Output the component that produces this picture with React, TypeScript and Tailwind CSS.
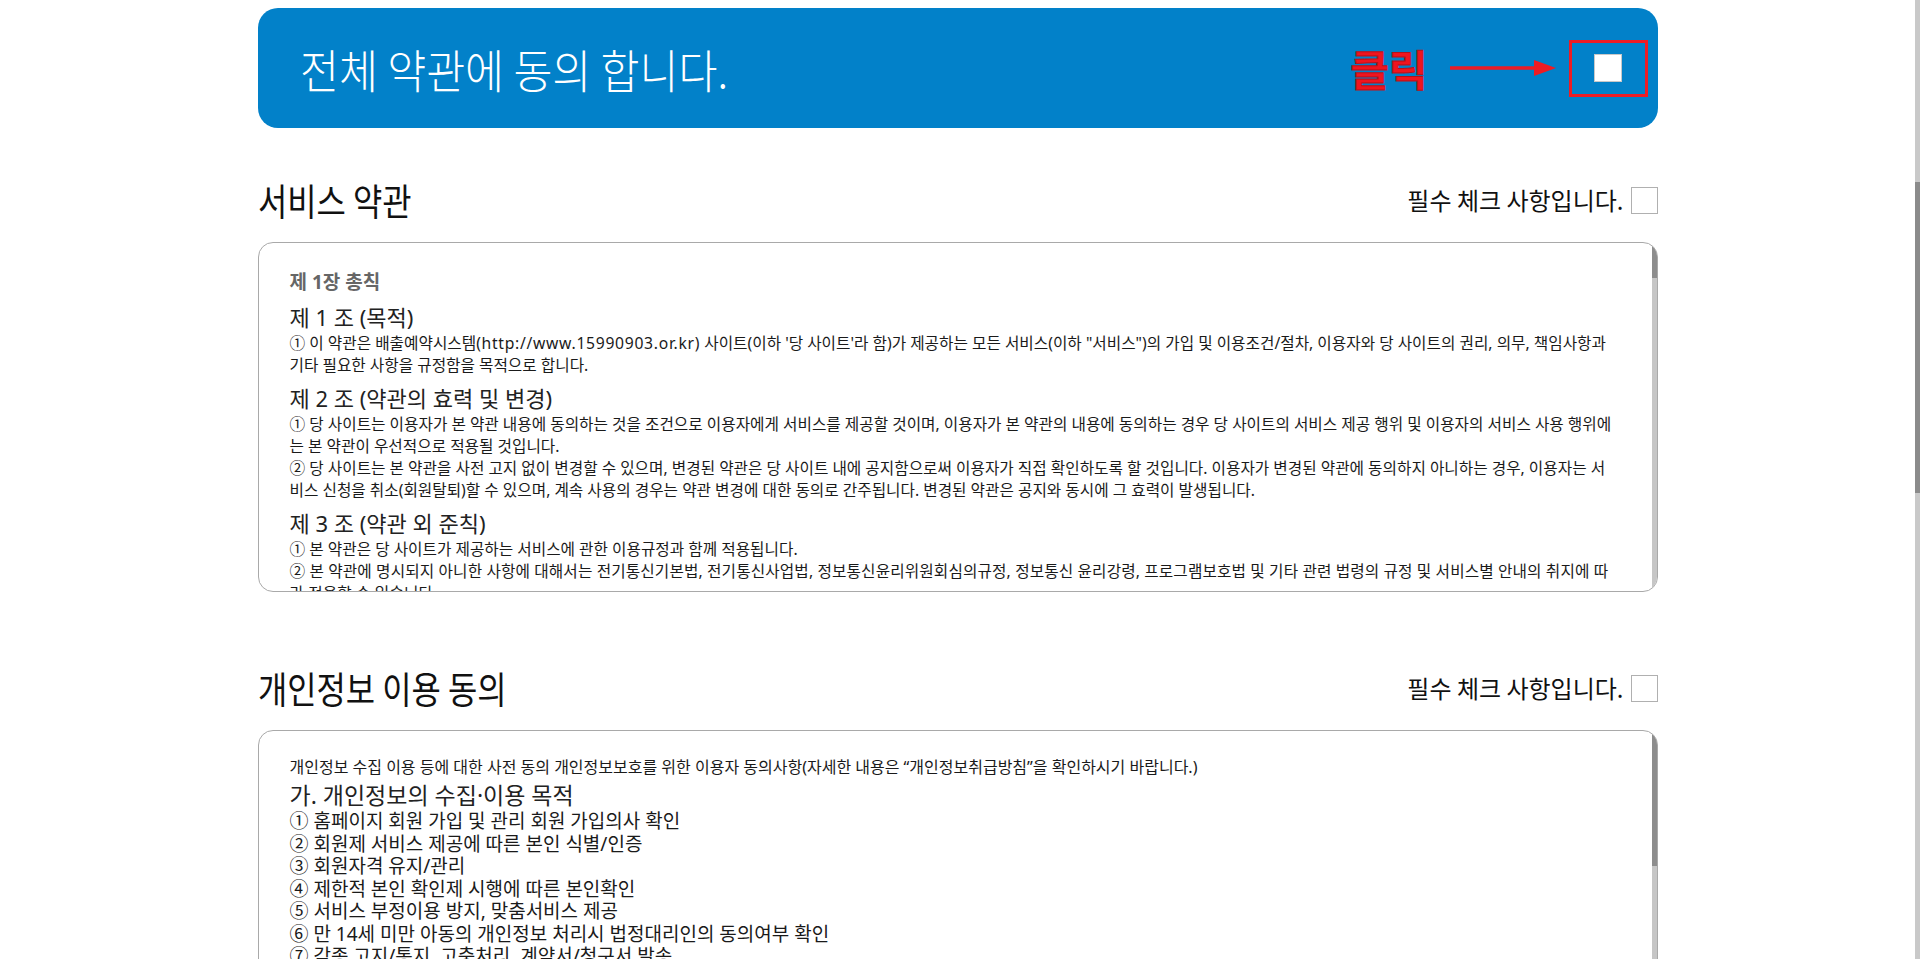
import React from "react";

const FONT = "font-['Noto_Sans','Noto_Sans_CJK_KR',sans-serif]";

function Check() {
  return <div className="h-[27px] w-[27px] shrink-0 border border-[#b0b0b0] bg-white" />;
}

function SectionHeader({ title, mt }: { title: string; mt: string }) {
  return (
    <div className={`flex h-10 items-center justify-between ${mt}`}>
      <h2 className="inline-block origin-left scale-x-[0.86] font-['Noto_Sans_CJK_KR',sans-serif] text-[37px] font-normal leading-none text-[#111]">
        {title}
      </h2>
      <div className="flex items-center gap-[7px]">
        <span className="font-['Noto_Sans_CJK_KR',sans-serif] text-[24px] leading-none text-[#111]">필수 체크 사항입니다.</span>
        <Check />
      </div>
    </div>
  );
}

function InnerScrollbar({ thumb }: { thumb: string }) {
  return (
    <div className="flex w-[5px] shrink-0 flex-col bg-[#c6c6c6]">
      <div className={`${thumb} bg-[#8d8d8d]`} />
    </div>
  );
}

const BODY = "text-[15.7px] leading-[22px]";
const ART = "mt-[7px] text-[22px] leading-[30px] text-[#222]";

export default function App() {
  return (
    <div className={`flex h-[959px] w-full overflow-hidden bg-white ${FONT}`}>
      <div className="min-w-0 flex-1">
        <div className="mx-auto w-[1400px] pt-2">
          {/* banner */}
          <div className="flex h-[120px] items-center justify-between rounded-[20px] bg-[#0281c9] pl-[42px] pr-[10px]">
            <span className="inline-block origin-left scale-x-[0.92] font-['Noto_Sans_CJK_KR',sans-serif] text-[46px] font-light leading-none text-white">
              전체 약관에 동의 합니다.
            </span>
            <div className="flex items-center">
              <span className="font-['Noto_Sans_CJK_KR',sans-serif] text-[42px] font-bold leading-none text-[#f0141e] [-webkit-text-stroke:1px_#b3121a]">
                클릭
              </span>
              <svg width="106" height="20" viewBox="0 0 106 20" className="ml-[22px]">
                <line x1="0" y1="10" x2="88" y2="10" stroke="#ee1c24" strokeWidth="3.5" />
                <polygon points="84,2 106,10 84,18" fill="#ee1c24" />
              </svg>
              <div className="ml-[13px] flex h-[57px] w-[79px] items-center justify-center border-[3px] border-[#ee1c24]">
                <div className="h-[28px] w-[28px] border border-[#c8c8c8] bg-white" />
              </div>
            </div>
          </div>

          {/* section 1 */}
          <SectionHeader title="서비스 약관" mt="mt-[52px]" />
          <div className="mt-[22px] flex h-[350px] overflow-hidden rounded-[15px] border border-[#a9a9a9]">
            <div className="min-w-0 flex-1 pl-[31px] pr-[34px] pt-[26px] text-[#1a1a1a]">
              <p className="text-[19px] font-bold leading-[26px] text-[#666]">제 1장 총칙</p>
              <h3 className={ART}>제 1 조 (목적)</h3>
              <p className={BODY}>
                ① 이 약관은 배출예약시스템<span className="tracking-[0.7px]">(http://www.15990903.or.kr)</span> 사이트(이하 '당 사이트'라 함)가 제공하는 모든 서비스(이하 "서비스")의 가입 및 이용조건/절차, 이용자와 당 사이트의 권리, 의무, 책임사항과 기타 필요한 사항을 규정함을 목적으로 합니다.
              </p>
              <h3 className={ART}>제 2 조 (약관의 효력 및 변경)</h3>
              <p className={BODY}>
                ① 당 사이트는 이용자가 본 약관 내용에 동의하는 것을 조건으로 이용자에게 서비스를 제공할 것이며, 이용자가 본 약관의 내용에 동의하는 경우 당 사이트의 서비스 제공 행위 및 이용자의 서비스 사용 행위에는 본 약관이 우선적으로 적용될 것입니다.
              </p>
              <p className={BODY}>
                ② 당 사이트는 본 약관을 사전 고지 없이 변경할 수 있으며, 변경된 약관은 당 사이트 내에 공지함으로써 이용자가 직접 확인하도록 할 것입니다. 이용자가 변경된 약관에 동의하지 아니하는 경우, 이용자는 서비스 신청을 취소(회원탈퇴)할 수 있으며, 계속 사용의 경우는 약관 변경에 대한 동의로 간주됩니다. 변경된 약관은 공지와 동시에 그 효력이 발생됩니다.
              </p>
              <h3 className={ART}>제 3 조 (약관 외 준칙)</h3>
              <p className={BODY}>① 본 약관은 당 사이트가 제공하는 서비스에 관한 이용규정과 함께 적용됩니다.</p>
              <p className={`${BODY} tracking-[0.12px]`}>
                ② 본 약관에 명시되지 아니한 사항에 대해서는 전기통신기본법, 전기통신사업법, 정보통신윤리위원회심의규정, 정보통신 윤리강령, 프로그램보호법 및 기타 관련 법령의 규정 및 서비스별 안내의 취지에 따라 적용할 수 있습니다.
              </p>
              <h3 className={ART}>제 4 조 (용어의 정의)</h3>
              <p className={BODY}>본 약관에서 사용하는 용어의 정의는 다음과 같습니다.</p>
            </div>
            <InnerScrollbar thumb="h-[35px]" />
          </div>

          {/* section 2 */}
          <SectionHeader title="개인정보 이용 동의" mt="mt-[76px]" />
          <div className="mt-[22px] flex h-[350px] overflow-hidden rounded-[15px] border border-[#a9a9a9]">
            <div className="min-w-0 flex-1 pl-[31px] pr-[30px] pt-[25px] text-[#1a1a1a]">
              <p className="text-[16px] leading-[22px]">
                개인정보 수집 이용 등에 대한 사전 동의 개인정보보호를 위한 이용자 동의사항(자세한 내용은 “개인정보취급방침”을 확인하시기 바랍니다.)
              </p>
              <h3 className="mt-[3px] text-[23px] leading-[29px] text-[#222]">가. 개인정보의 수집·이용 목적</h3>
              <ul className="text-[19px] leading-[22.5px]">
                <li>① 홈페이지 회원 가입 및 관리 회원 가입의사 확인</li>
                <li>② 회원제 서비스 제공에 따른 본인 식별/인증</li>
                <li>③ 회원자격 유지/관리</li>
                <li>④ 제한적 본인 확인제 시행에 따른 본인확인</li>
                <li>⑤ 서비스 부정이용 방지, 맞춤서비스 제공</li>
                <li>⑥ 만 14세 미만 아동의 개인정보 처리시 법정대리인의 동의여부 확인</li>
                <li>⑦ 각종 고지/통지, 고충처리, 계약서/청구서 발송</li>
                <li>⑧ 접속빈도 파악 또는 회원의 서비스 이용에 대한 통계</li>
              </ul>
            </div>
            <InnerScrollbar thumb="h-[135px]" />
          </div>
        </div>
      </div>
      {/* page scrollbar */}
      <div className="flex w-[5px] shrink-0 flex-col bg-[#c9c9c9]">
        <div className="h-[182px]" />
        <div className="h-[311px] bg-[#8b8b8b]" />
      </div>
    </div>
  );
}
